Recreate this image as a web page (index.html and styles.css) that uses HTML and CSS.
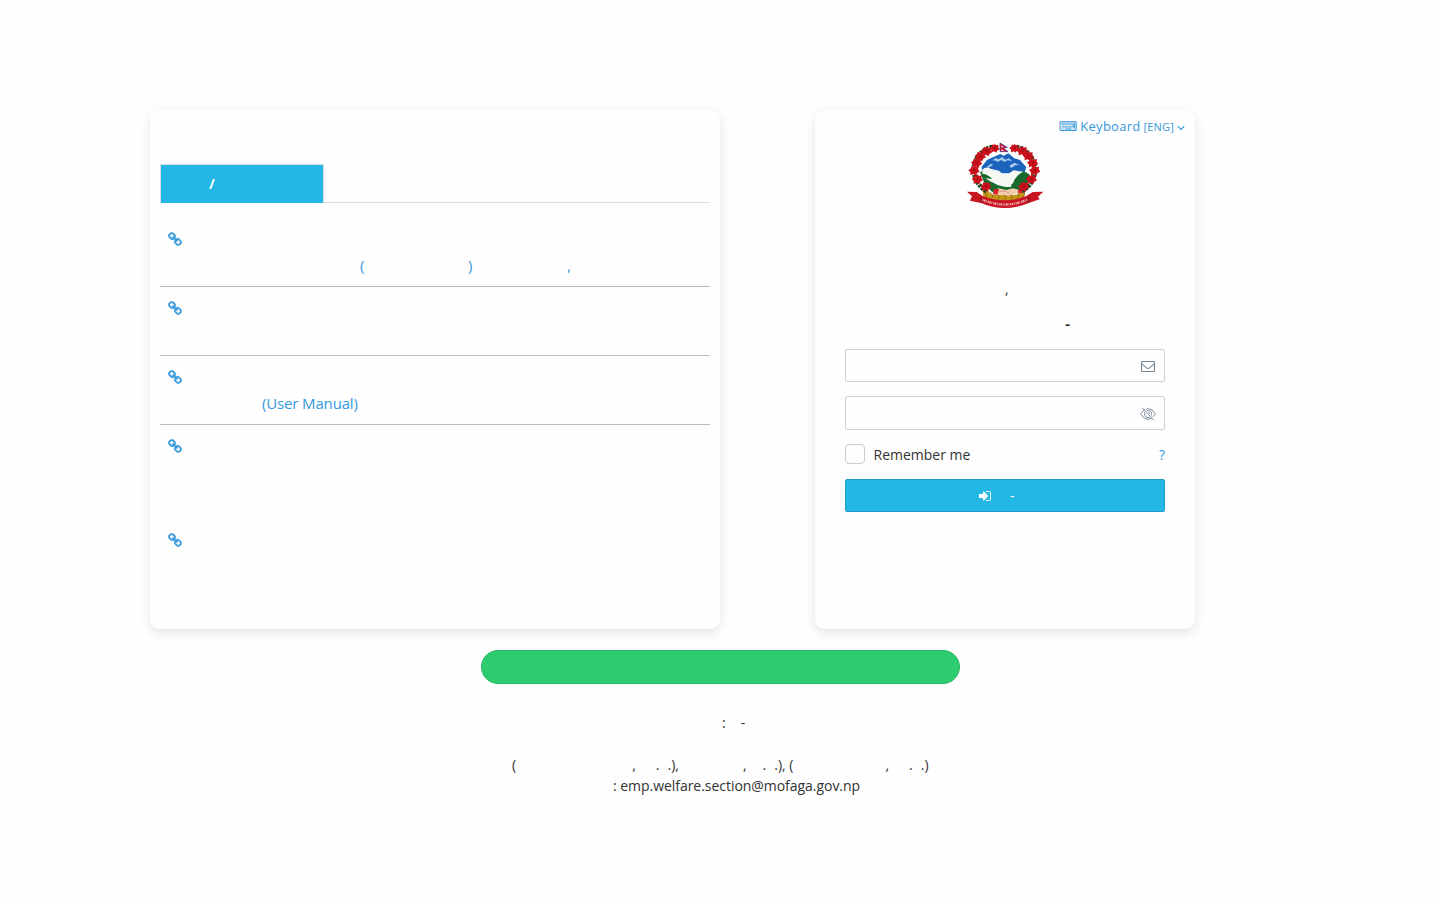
FILE: index.html
```html
<!DOCTYPE html>
<html lang="ne">
<head>
<meta charset="utf-8">
<title>Login</title>
<link rel="stylesheet" href="styles.css">
</head>
<body>
<svg class="defs" width="0" height="0">
  <defs>
    <symbol id="link" viewBox="0 0 1792 1792"><path d="M1456 1216q0-40-28-68l-208-208q-28-28-68-28-42 0-72 32 3 3 19 18.500t21.500 21.500 15 19 13 25.500 3.500 27.500q0 40-28 68t-68 28q-15 0-27.500-3.500t-25.500-13-19-15-21.500-21.500-18.500-19q-33 31-33 73 0 40 28 68l206 207q27 27 68 27 40 0 68-26l147-146q28-28 28-67zm-703-705q0-40-28-68l-206-207q-28-28-68-28-39 0-68 27l-147 146q-28 28-28 67 0 40 28 68l208 208q27 27 68 27 42 0 72-31-3-3-19-18.500t-21.500-21.500-15-19-13-25.500-3.500-27.500q0-40 28-68t68-28q15 0 27.500 3.500t25.500 13 19 15 21.500 21.500 18.500 19q33-31 33-73zm895 705q0 120-85 203l-147 146q-83 83-203 83-121 0-204-85l-206-207q-83-83-83-203 0-123 88-209l-88-88q-86 88-208 88-120 0-204-84l-208-208q-84-84-84-204t85-203l147-146q83-83 203-83 121 0 204 85l206 207q83 83 83 203 0 123-88 209l88 88q86-88 208-88 120 0 204 84l208 208q84 84 84 204z"/></symbol>
    <g id="flower">
      <path d="M0-16L5-10 13-12 12-4 17 3 9 7 5 15-2 10-11 13-11 5-17-2-10-6-8-14-1-10z" fill="#cb0f1b"/>
      <path d="M-4-4L3-5 5 1-1 4z" fill="#a5101a"/>
    </g>
  </defs>
</svg>
<main class="page">
  <div class="cards">
    <section class="card notices">
      <div class="tabs"><div class="tab">/</div></div>
      <ul class="list">
        <li class="item"><svg class="chain"><use href="#link"/></svg>
          <p class="line"><span class="open">(</span><span class="close">)</span><span class="comma">,</span></p></li>
        <li class="item"><svg class="chain"><use href="#link"/></svg></li>
        <li class="item"><svg class="chain"><use href="#link"/></svg>
          <p class="line"><span class="manual">(User Manual)</span></p></li>
        <li class="item tall"><svg class="chain"><use href="#link"/></svg></li>
        <li class="item last"><svg class="chain"><use href="#link"/></svg></li>
      </ul>
    </section>
    <section class="card login">
      <div class="keyboard"><span class="keys">⌨</span><span class="word">Keyboard</span><small>[ENG]</small>
        <svg class="chevron" viewBox="0 0 8 6"><path d="M.8 1.200L4 4.400 7.200 1.200"/></svg></div>
      <svg class="emblem" viewBox="0 0 300 240">
        <path d="M80 95L96 75 115 66 136 57 146 62 160 55 178 70 195 75 214 97 208 115H82z" fill="#1c63bd"/>
        <path d="M112 76l10-7 8 4 11-7 10 8 11-4 9 8-14-2-8 5-10-6-11 6-5-4zM97 94l12-8 5 4-16 10zM163 92l16-9 14 8-11-1-13 9z" fill="#a9cbed"/>
        <path d="M75 112Q94 99 116 109L151 127 184 112Q207 103 224 120L217 148 196 168 168 172H112L91 151z" fill="#176a2e"/>
        <path d="M82 104Q94 92 109 102L132 107 150 123 176 106 205 110Q182 120 173 146L128 150Q105 145 88 129L111 132Q101 118 82 116z" fill="#f6f8f4"/>
        <path d="M88 127Q108 144 130 148L170 147 182 158 170 168 116 167 94 149z" fill="#176a2e"/>
        <path d="M113 132Q145 139 171 142L168 156Q139 156 120 146z" fill="#f6f8f4"/>
        <path d="M92 151Q100 175 112 179H185Q201 169 208 151L213 158 207 188Q150 216 85 186L83 166z" fill="#c39519"/>
        <path d="M87 172q15 12 0 16m17-18q17 13 2 25m18-22q16 14 0 28m20-28q15 13 1 29m18-29q16 11 1 28m18-33q16 9 1 29m18-30q14 5 1 23" fill="none" stroke="#7b5a12" stroke-width="2"/>
        <path d="M114 169L131 160 154 165 173 160 190 164 194 174 171 178 161 183 139 178 119 180z" fill="#f1c9ad"/>
        <path d="M117 161l15 2-5 16-13-1zM190 163l14 1-2 11-13-2z" fill="#d7202a"/>
        <path d="M133 171q13-8 29 4" fill="none" stroke="#c68471" stroke-width="2"/>
        <path d="M112 36C69 45 46 91 61 128Q70 155 96 169M184 36C228 45 250 91 235 128Q226 155 200 169" fill="none" stroke="#214923" stroke-width="14" stroke-dasharray="8 3"/>
        <use href="#flower" transform="translate(119 40) scale(.9)"/><use href="#flower" transform="translate(95 49)"/><use href="#flower" transform="translate(76 64)"/><use href="#flower" transform="translate(65 84)"/><use href="#flower" transform="translate(57 107)"/>
        <use href="#flower" transform="translate(67 133)"/><use href="#flower" transform="translate(93 155)"/>
        <use href="#flower" transform="translate(178 40) scale(.9)"/><use href="#flower" transform="translate(202 48)"/><use href="#flower" transform="translate(220 63)"/><use href="#flower" transform="translate(233 84)"/><use href="#flower" transform="translate(239 107)"/>
        <use href="#flower" transform="translate(229 133)"/><use href="#flower" transform="translate(206 155)"/>
        <path d="M36 170L65 171 84 184Q150 208 214 183L233 171 265 170 249 185 254 193 223 203Q150 235 78 204L45 197 51 184z" fill="#c91522"/>
        <path d="M75 183l9 15-6 6zM224 183l-10 15 7 6z" fill="#781219"/>
        <path d="M82 194Q150 223 217 194" fill="none" stroke="#efafb0" stroke-width="7" stroke-dasharray="3 2 5 2 2 3"/>
        <path d="M135 24L157 37 146 39 159 50H135z" fill="#d51b32" stroke="#293d87" stroke-width="2"/>
        <path d="M139 35h5m-5 11h6" stroke="#fff" stroke-width="3"/>
      </svg>
      <div class="titles"><p class="office">,</p><p class="system">-</p></div>
      <div class="field"><svg class="envelope" viewBox="0 0 1792 1792"><path d="M1664 1504v-768q-32 36-69 66-268 206-426 338-51 43-83 67t-86.500 48.500-102.500 24.500h-2q-48 0-102.500-24.500t-86.500-48.500-83-67q-158-132-426-338-37-30-69-66v768q0 13 9.500 22.500t22.500 9.500h1472q13 0 22.500-9.500t9.500-22.500zm0-1051v-24.500l-.5-13-3-12.500-5.500-9-9-7.500-14-2.500h-1472q-13 0-22.500 9.500t-9.500 22.500q0 168 147 284 193 152 401 317 6 5 35 29.500t46 37.500 44.500 31.500 50.500 27.500 43 9h2q20 0 43-9t50.500-27.500 44.500-31.500 46-37.500 35-29.500q208-165 401-317 54-43 100.500-115.500t46.500-131.500zm128-37v1088q0 66-47 113t-113 47h-1472q-66 0-113-47t-47-113v-1088q0-66 47-113t113-47h1472q66 0 113 47t47 113z"/></svg></div>
      <div class="field password"><svg class="eye" viewBox="0 0 16 14"><path d="M.6 7Q3.500 1.700 8 1.700T15.400 7Q12.500 12.300 8 12.300T.6 7z"/><path d="M5.200 4.500Q3.400 7 5.500 9.500Q7 11 9.500 10.500M7 3.600Q10 3 11.400 5.400Q12.200 7.300 11 9.300M8 5.200Q9.800 5.300 9.900 7"/><path class="gap" d="M3 .2L14.700 12.800"/><path d="M2.200.7L14 13.300"/></svg></div>
      <div class="options"><span class="check"></span><span>Remember me</span><a class="forgot">?</a></div>
      <div class="submit"><svg class="enter" viewBox="0 0 1792 1792"><path d="M1312 896q0 26-19 45l-544 544q-19 19-45 19t-45-19-19-45v-288h-448q-26 0-45-19t-19-45v-384q0-26 19-45t45-19h448v-288q0-26 19-45t45-19 45 19l544 544q19 19 19 45zm352-352v704q0 119-84.500 203.500t-203.500 84.500h-320q-13 0-22.500-9.500t-9.500-22.500q0-4-1-20t-.5-26.500 3-23.500 10-19.500 20.500-6.500h320q66 0 113-47t47-113v-704q0-66-47-113t-113-47h-312l-11.500-1-11.500-3-8-5.500-7-9-2-13.500q0-4-1-20t-.5-26.500 3-23.500 10-19.500 20.500-6.500h320q119 0 203.500 84.500t84.500 203.500z"/></svg><span>-</span></div>
    </section>
  </div>
  <div class="banner"></div>
  <footer class="contact">
    <p class="phone"><span>:</span><span class="dash">-</span></p>
    <p class="people"><span>(</span><span class="p1">,</span><span class="p2">.</span><span class="p3">.),</span><span class="p4">,</span><span class="p5">.</span><span class="p6">.), (</span><span class="p7">,</span><span class="p8">.</span><span class="p9">.)</span></p>
    <p class="email">: emp.welfare.section@mofaga.gov.np</p>
  </footer>
</main>
</body>
</html>
```
FILE: styles.css
```css
* { box-sizing: border-box; }
body { margin: 0; background: #fefefe; color: #333; font: 14px/21px "Open Sans", "Noto Sans", sans-serif; }
p, ul { margin: 0; padding: 0; list-style: none; }
svg { display: block; flex: none; }
.defs { position: absolute; }
.page { height: 900px; padding-top: 110px; overflow: hidden; }
.cards { display: flex; gap: 95px; padding-left: 150px; }
.card { height: 519px; border-radius: 10px; background: #fefefe; box-shadow: 0 4px 12px rgba(0, 0, 0, .1); }
.notices { width: 570px; padding: 54px 10px 0; color: #3598dc; font-size: 15px; }
.tabs { height: 39px; border-bottom: 1px solid #ddd; }
.tab { width: 164px; height: 39px; padding: 8px 0 0 48px; border: 1px solid #ddd; border-bottom: 0; background: #23b7e5; color: #fff; font-size: 14px; font-weight: 700; }
.list { padding-top: 15px; }
.item { height: 69px; padding: 14px 0 0 8px; border-bottom: 1px solid #bbb; }
.item.tall { height: 94px; border: 0; }
.item.last { border: 0; }
.chain { width: 15px; height: 15px; fill: #3598dc; stroke: #3598dc; stroke-width: 30; }
.line { display: flex; margin-top: 8px; }
.open { width: 108px; margin-left: 192px; }
.close { width: 99px; }
.manual { margin-left: 94px; letter-spacing: -.15px; }
.login { width: 380px; padding: 7px 30px 0; }
.keyboard { display: flex; justify-content: flex-end; align-items: baseline; height: 18px; margin-right: -20px; color: #3598dc; font-size: 13px; line-height: 18px; }
.keys { margin-right: 3px; font-family: "DejaVu Sans", sans-serif; }
.word { letter-spacing: .25px; }
.keyboard small { margin: 0 3px; font-size: 11px; letter-spacing: .2px; }
.chevron { width: 8px; height: 6px; margin-bottom: 1px; fill: none; stroke: #3598dc; stroke-width: 1.200; }
.emblem { width: 100px; height: 80px; margin: 0 auto; }
.titles { height: 134px; padding-top: 63px; }
.office { padding-left: 160px; }
.system { margin-top: 15px; padding-left: 220px; font-size: 16px; font-weight: 600; color: #222; }
.field { display: flex; justify-content: flex-end; height: 33px; padding: 9px 9px 0; border: 1px solid #ccd1d9; border-radius: 2px; background: #fefefe; }
.password { height: 34px; margin-top: 14px; padding: 10px 8px 0; }
.envelope { width: 14px; height: 14px; fill: #748394; }
.eye { width: 16px; height: 14px; fill: none; stroke: #8492a1; stroke-width: 1; }
.eye .gap { stroke: #fefefe; }
.options { display: flex; align-items: flex-start; height: 21px; margin-top: 14px; gap: 8.500px; }
.check { width: 20px; height: 20px; border: 1px solid #ccc; border-radius: 4px; }
.forgot { margin-left: auto; color: #3598dc; }
.submit { display: flex; align-items: center; gap: 18px; height: 33px; margin-top: 14px; padding-left: 132px; border: 1px solid #1f9cc3; border-radius: 2px; background: #23b7e5; color: #fff; }
.enter { width: 14px; height: 14px; fill: #fff; }
.banner { width: 479px; height: 34px; margin: 21px 0 0 481px; border: 1px solid #29b765; border-radius: 17px; background: #2ecc71; }
.contact { padding-top: 28px; }
.phone { display: flex; padding-left: 722px; }
.dash { margin-left: 15px; }
.people { display: flex; margin-top: 21px; padding-left: 512px; white-space: nowrap; }
.p1 { margin-left: 116px; }
.p2 { margin-left: 20px; }
.p3 { margin-left: 8px; }
.p4 { margin-left: 64px; }
.p5 { margin-left: 16px; }
.p6 { margin-left: 8px; }
.p7 { margin-left: 92px; }
.p8 { margin-left: 20px; }
.p9 { margin-left: 8px; }
.email { padding-left: 613px; letter-spacing: -.04px; }
```
